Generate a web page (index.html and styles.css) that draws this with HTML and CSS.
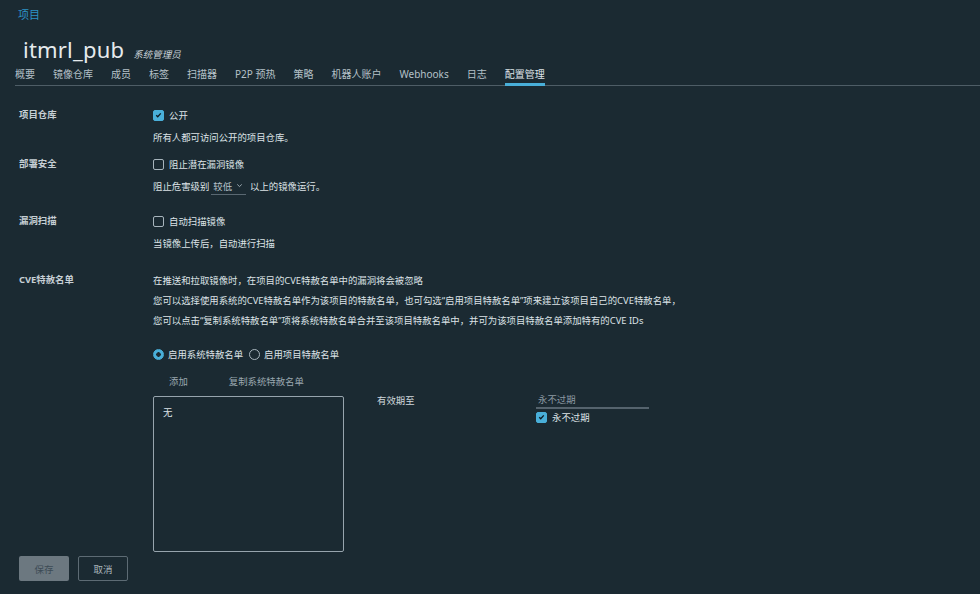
FILE: index.html
```html
<!DOCTYPE html>
<html lang="zh">
<head>
<meta charset="utf-8">
<link rel="stylesheet" href="styles.css">
</head>
<body>
<div class="page">
  <div class="crumb">项目</div>
  <div class="title-row">
    <span class="title">itmrl_pub</span>
    <span class="role">系统管理员</span>
  </div>
  <nav class="tabs">
    <span class="tab">概要</span>
    <span class="tab">镜像仓库</span>
    <span class="tab">成员</span>
    <span class="tab">标签</span>
    <span class="tab">扫描器</span>
    <span class="tab">P2P 预热</span>
    <span class="tab">策略</span>
    <span class="tab">机器人账户</span>
    <span class="tab">Webhooks</span>
    <span class="tab">日志</span>
    <span class="tab active">配置管理</span>
  </nav>

  <div class="form">
    <div class="row r1">
      <div class="label">项目仓库</div>
      <div class="ctrl">
        <div class="line"><span class="cb on"><svg viewBox="0 0 12 12"><path d="M3 6.2 L5 8.2 L9 3.8" /></svg></span>公开</div>
        <div class="line help">所有人都可访问公开的项目仓库。</div>
      </div>
    </div>
    <div class="row r2">
      <div class="label">部署安全</div>
      <div class="ctrl">
        <div class="line"><span class="cb"></span>阻止潜在漏洞镜像</div>
        <div class="line help">阻止危害级别<span class="select">较低<svg viewBox="0 0 10 10"><path d="M2.5 3.8 L5 6.2 L7.5 3.8"/></svg></span>以上的镜像运行。</div>
      </div>
    </div>
    <div class="row r3">
      <div class="label">漏洞扫描</div>
      <div class="ctrl">
        <div class="line"><span class="cb"></span>自动扫描镜像</div>
        <div class="line help">当镜像上传后，自动进行扫描</div>
      </div>
    </div>
    <div class="row r4">
      <div class="label">CVE特赦名单</div>
      <div class="ctrl">
        <div class="line">在推送和拉取镜像时，在项目的CVE特赦名单中的漏洞将会被忽略</div>
        <div class="line">您可以选择使用系统的CVE特赦名单作为该项目的特赦名单，也可勾选“启用项目特赦名单”项来建立该项目自己的CVE特赦名单，</div>
        <div class="line">您可以点击“复制系统特赦名单”项将系统特赦名单合并至该项目特赦名单中，并可为该项目特赦名单添加特有的CVE IDs</div>
        <div class="line radios">
          <span class="rd on"></span><span class="rtext">启用系统特赦名单</span>
          <span class="rd"></span><span class="rtext">启用项目特赦名单</span>
        </div>
        <div class="line actions"><span class="act">添加</span><span class="act">复制系统特赦名单</span></div>
        <div class="list-row">
          <div class="listbox">无</div>
          <div class="expire-label">有效期至</div>
          <div class="expire">
            <div class="exp-input">永不过期</div>
            <div class="line exp-check"><span class="cb on"><svg viewBox="0 0 12 12"><path d="M3 6.2 L5 8.2 L9 3.8" /></svg></span>永不过期</div>
          </div>
        </div>
      </div>
    </div>
    <div class="buttons">
      <span class="btn save">保存</span>
      <span class="btn cancel">取消</span>
    </div>
  </div>
</div>
</body>
</html>
```
FILE: styles.css
```css
html, body {
  margin: 0;
  padding: 0;
  background: #1b2a32;
  width: 980px;
  height: 594px;
  overflow: hidden;
}
body {
  font-family: "Noto Sans", "Noto Sans CJK SC", sans-serif;
  color: #dde3e7;
  font-size: 9.4px;
}
.crumb {
  padding-left: 18px;
  padding-top: 6px;
  height: 17px;
  line-height: 17px;
  font-size: 11px;
  color: #2d93c6;
}
.title-row {
  display: flex;
  align-items: baseline;
  padding-left: 23px;
  margin-top: 10px;
  height: 32px;
  line-height: 32px;
}
.title {
  font-size: 22px;
  color: #e6eaed;
  letter-spacing: 0.2px;
}
.role {
  margin-left: 9px;
  font-size: 9.5px;
  font-style: italic;
  color: #c9d2d8;
}
.tabs {
  display: flex;
  gap: 18px;
  margin-left: 15px;
  border-bottom: 1px solid #4e5d66;
  height: 20px;
}
.tab {
  font-size: 10px;
  line-height: 19px;
  color: #b5c1c8;
  position: relative;
}
.tab.active {
  color: #dde3e7;
}
.tab.active::after {
  content: "";
  position: absolute;
  left: 0;
  right: 0;
  bottom: -1px;
  height: 3px;
  background: #49afd9;
}
.form {
  padding-left: 19px;
  padding-top: 19px;
}
.row {
  display: flex;
}
.label {
  width: 134px;
  flex: none;
  font-weight: 700;
  color: #c6cfd5;
  line-height: 20px;
  font-size: 9.4px;
}
.ctrl {
  flex: 1;
}
.line {
  display: flex;
  align-items: center;
  height: 20px;
  white-space: nowrap;
}
.help {
  margin-top: 2px;
}
.r2 { margin-top: 7px; }
.r3 { margin-top: 15px; }
.r4 { margin-top: 17px; }
.cb {
  width: 9px;
  height: 9px;
  border: 1px solid #a7b4bc;
  border-radius: 2px;
  margin-right: 5px;
  display: inline-flex;
  align-items: center;
  justify-content: center;
  flex: none;
}
.cb.on {
  background: #49afd9;
  border-color: #49afd9;
}
.cb svg {
  width: 10px;
  height: 10px;
  fill: none;
  stroke: #0d1a22;
  stroke-width: 1.8;
}
.select {
  display: inline-flex;
  align-items: center;
  margin: 0 4px 0 2px;
  padding: 0 2px 0 2px;
  height: 17px;
  border-bottom: 1px solid #5a6872;
  color: #b8c3ca;
  gap: 3px;
}
.select svg {
  width: 9px;
  height: 9px;
  fill: none;
  stroke: #a7b4bc;
  stroke-width: 1;
}
.radios {
  margin-top: 14px;
}
.rd {
  width: 9px;
  height: 9px;
  border: 1px solid #a7b4bc;
  border-radius: 50%;
  margin-right: 4px;
  flex: none;
  box-sizing: content-box;
}
.rd.on {
  border-color: #49afd9;
  background: radial-gradient(circle, #1b2a32 0 2px, #49afd9 2.5px);
}
.rtext {
  margin-right: 6px;
}
.actions {
  margin-top: 7px;
  color: #9aa7af;
  padding-left: 16px;
}
.act:first-child {
  margin-right: 41px;
}
.list-row {
  display: flex;
  align-items: flex-start;
  margin-top: 5px;
}
.listbox {
  width: 180px;
  height: 148px;
  border: 1px solid #97a4ad;
  border-radius: 2px;
  padding: 6px 0 0 9px;
  line-height: 20px;
}
.expire-label {
  margin-left: 33px;
  width: 159px;
  line-height: 13px;
  margin-top: -2px;
  color: #d0d8dd;
}
.expire {
  width: 113px;
}
.exp-input {
  height: 14px;
  line-height: 14px;
  margin-top: -3px;
  padding-left: 2px;
  color: #8c99a2;
  border-bottom: 2px solid #55636d;
}
.exp-check {
  height: 16px;
  margin-top: 0;
}
.buttons {
  display: flex;
  gap: 9px;
  margin-top: 4px;
}
.btn {
  width: 50px;
  height: 25px;
  box-sizing: border-box;
  border-radius: 2px;
  display: flex;
  align-items: center;
  justify-content: center;
  font-size: 9.5px;
}
.save {
  background: #6c7880;
  color: #3c4b55;
}
.cancel {
  border: 1px solid #5d6b74;
  color: #a9b5bc;
}
```
